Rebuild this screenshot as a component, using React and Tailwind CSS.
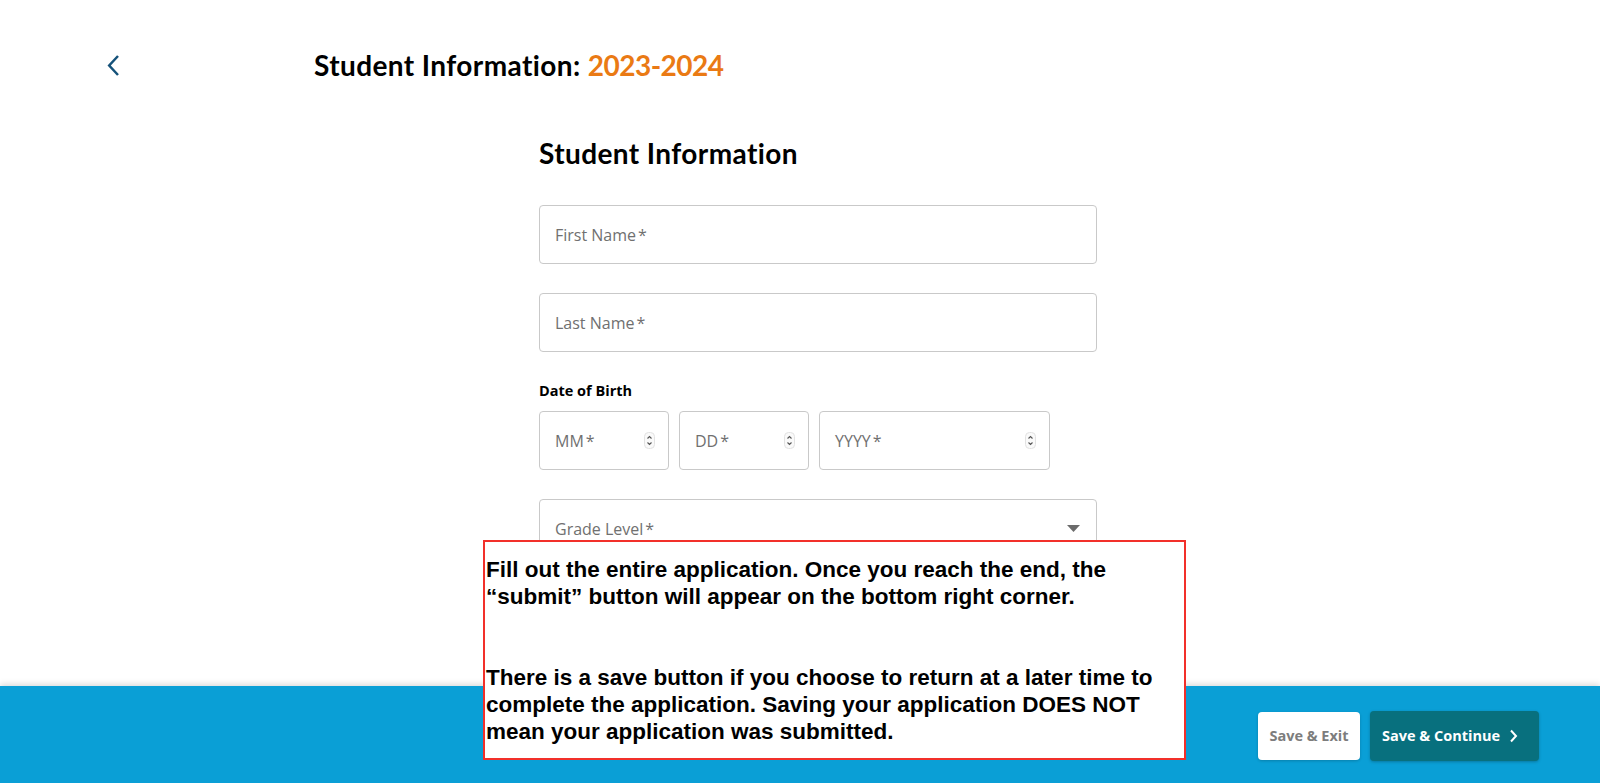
import React from "react";

function Spinner() {
  return (
    <svg width="11" height="17" viewBox="0 0 11 17" className="shrink-0">
      <rect x="0.5" y="0.5" width="10" height="16" rx="4" fill="#fafafa" stroke="#e2e2e2" />
      <path d="M3.5 6.5 L5.5 4.5 L7.5 6.5" fill="none" stroke="#555" strokeWidth="1.1" />
      <path d="M3.5 10.5 L5.5 12.5 L7.5 10.5" fill="none" stroke="#555" strokeWidth="1.1" />
    </svg>
  );
}

function Field({ label, className = "", right = null }) {
  return (
    <div
      className={
        "flex h-[59px] items-center justify-between rounded-[4px] border border-[#c9c9c9] bg-white pl-[15px] pr-[13px] " +
        className
      }
    >
      <span className="text-[16px] text-[#707070]" style={{ fontFamily: '"Open Sans", sans-serif' }}>
        {label}
        <span className="ml-[2px]">*</span>
      </span>
      {right}
    </div>
  );
}

export default function App() {
  return (
    <div className="relative flex h-[783px] w-full flex-col overflow-hidden bg-white">
      <main className="flex-1 overflow-hidden">
        <header className="mt-[49px] flex h-[32px] items-center">
          <div className="ml-[106px] w-[208px]">
            <svg width="15" height="23" viewBox="0 0 15 23">
              <path d="M12 2 L3.2 11.5 L12 21" fill="none" stroke="#15527a" strokeWidth="2.5" />
            </svg>
          </div>
          <h1
            className="text-[28px] font-bold leading-[32px] tracking-[0.4px] text-black"
            style={{ fontFamily: "Lato, sans-serif" }}
          >
            Student Information: <span className="tracking-[-0.5px] text-[#ea7a14]">2023-2024</span>
          </h1>
        </header>

        <section className="ml-[539px] w-[558px]">
          <h2
            className="mt-[56px] text-[28px] font-bold leading-[32px] tracking-[0.4px] text-black"
            style={{ fontFamily: "Lato, sans-serif" }}
          >
            Student Information
          </h2>

          <Field label="First Name" className="mt-[36px]" />
          <Field label="Last Name" className="mt-[29px]" />

          <div
            className="mt-[29px] text-[14.5px] font-bold leading-[20px] text-black"
            style={{ fontFamily: '"Open Sans", sans-serif' }}
          >
            Date of Birth
          </div>
          <div className="mt-[10px] flex gap-[10px]">
            <Field label="MM" className="w-[130px]" right={<Spinner />} />
            <Field label="DD" className="w-[130px]" right={<Spinner />} />
            <Field label="YYYY" className="w-[231px]" right={<Spinner />} />
          </div>

          <Field
            label="Grade Level"
            className="mt-[29px] pr-[16px]"
            right={
              <svg width="13" height="7" viewBox="0 0 13 7">
                <path d="M0 0 L13 0 L6.5 7 Z" fill="#6b6b6b" />
              </svg>
            }
          />
        </section>
      </main>

      <footer className="flex h-[97px] shrink-0 items-center justify-end gap-[10px] bg-[#0a9fd6] pr-[61px] pt-[3px] shadow-[0_-2px_6px_rgba(0,0,0,0.15)]">
        <button
          className="h-[48px] w-[102px] rounded-[4px] bg-white text-[14.5px] font-bold text-[#7d7d7d] shadow-[0_1px_3px_rgba(0,0,0,0.2)]"
          style={{ fontFamily: '"Open Sans", sans-serif' }}
        >
          Save &amp; Exit
        </button>
        <button
          className="flex h-[50px] w-[169px] items-center justify-start gap-[9px] rounded-[4px] bg-[#08707e] pl-[12px] text-[14.5px] font-bold text-white shadow-[0_1px_3px_rgba(0,0,0,0.25)]"
          style={{ fontFamily: '"Open Sans", sans-serif' }}
        >
          <span>Save &amp; Continue</span>
          <svg width="9" height="14" viewBox="0 0 9 14">
            <path d="M2 1.5 L7 7 L2 12.5" fill="none" stroke="#fff" strokeWidth="2" />
          </svg>
        </button>
      </footer>

      <div
        className="absolute left-[483px] top-[540px] w-[703px] border-2 border-[#f2302a] bg-white pb-[13px] pl-[1px] pr-[4px] pt-[14px] text-[22.5px] font-bold leading-[27px] text-black"
        style={{ fontFamily: '"Liberation Sans", Arial, sans-serif' }}
      >
        <p>
          Fill out the entire application. Once you reach the end, the “submit” button will appear on the bottom right
          corner.
        </p>
        <p className="mt-[54px]">
          There is a save button if you choose to return at a later time to complete the application. Saving your
          application DOES NOT mean your application was submitted.
        </p>
      </div>
    </div>
  );
}
